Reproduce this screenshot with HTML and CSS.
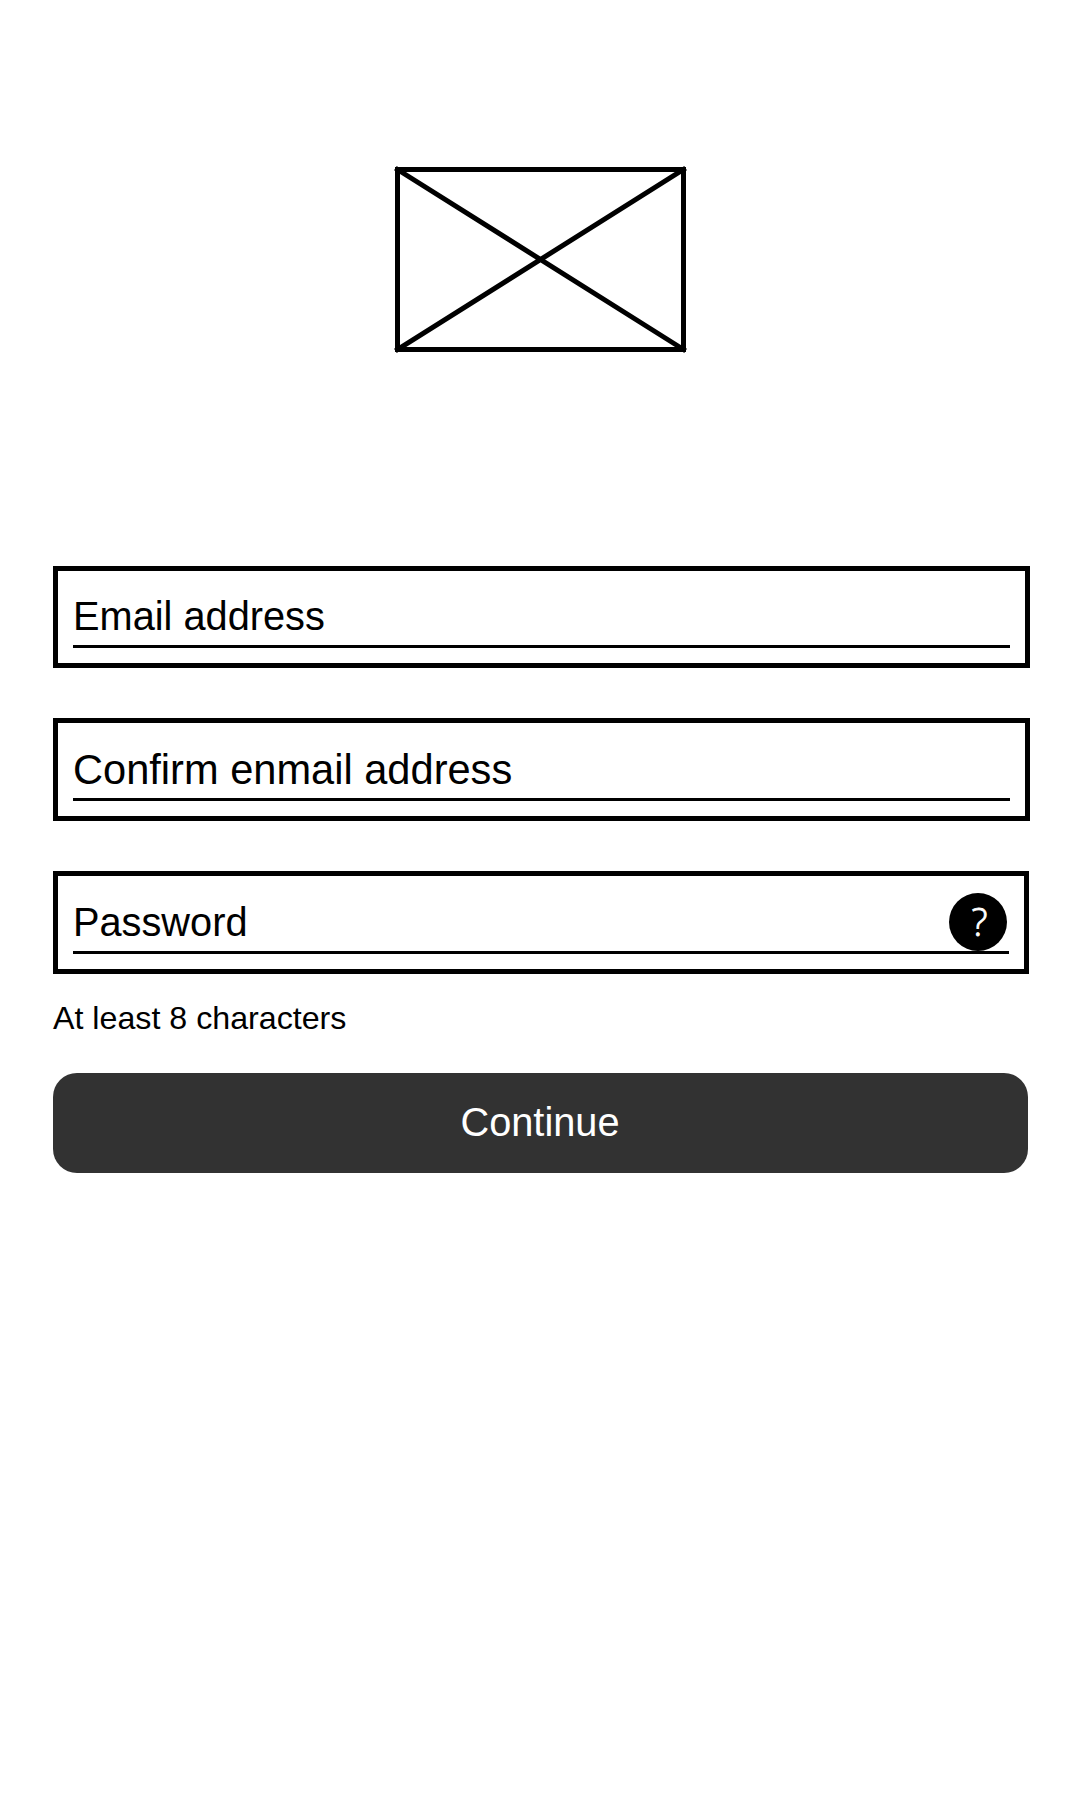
FILE: index.html
```html
<!DOCTYPE html>
<html lang="en">
<head>
<meta charset="utf-8">
<title>Create account</title>
<link rel="stylesheet" href="styles.css">
</head>
<body>
<main class="page">
  <svg class="logo" viewBox="0 0 296 190" width="296" height="190" aria-label="Logo">
    <path d="M4.5 4.5H290.5V184.5H4.5Z"/>
    <path class="cross" d="M4.5 4.5L290.5 184.5M290.5 4.5L4.5 184.5"/>
  </svg>
  <form class="form">
    <label class="field email"><span class="line">Email address</span></label>
    <label class="field confirm"><span class="line">Confirm enmail address</span></label>
    <label class="field password"><span class="line">Password</span><span class="help">?</span></label>
    <p class="hint">At least 8 characters</p>
    <button class="continue" type="button">Continue</button>
  </form>
</main>
</body>
</html>
```
FILE: styles.css
```css
* { box-sizing: border-box; }
body { margin: 0; background: #fff; color: #000; font-family: "Liberation Sans", Arial, sans-serif; }
.page { height: 1800px; padding: 165px 50px 0 53px; }
.logo { display: block; margin-left: 340px; fill: none; stroke: #000; stroke-width: 5; }
.cross { stroke-linecap: square; }
.form { margin-top: 211px; }
.field { position: relative; display: block; height: 103px; margin-bottom: 50px; padding: 14px 15px 0; border: 5px solid #000; }
.email { height: 102px; padding-top: 13px; }
.line { display: block; height: 64px; border-bottom: 3px solid #000; font-size: 39.75px; line-height: 64px; white-space: nowrap; }
.confirm .line { font-size: 41.6px; line-height: 66px; }
.password { margin: 0 1px 0 0; }
.help { position: absolute; right: 17px; top: 17px; width: 58px; height: 58px; padding-left: 3px; border-radius: 50%; background: #000; color: #fff; font: 300 38px/57px "Open Sans", "Noto Sans", sans-serif; -webkit-text-stroke: 0.8px #fff; text-align: center; }
.hint { margin: 26px 0 0; font-size: 32.2px; line-height: 36px; }
.continue { display: block; width: 975px; height: 100px; margin: 37px 0 0; padding: 0 1px 1px 0; border: 0; border-radius: 24px; background: #323232; color: #fff; font-family: inherit; font-size: 39.75px; line-height: 99px; }
```
